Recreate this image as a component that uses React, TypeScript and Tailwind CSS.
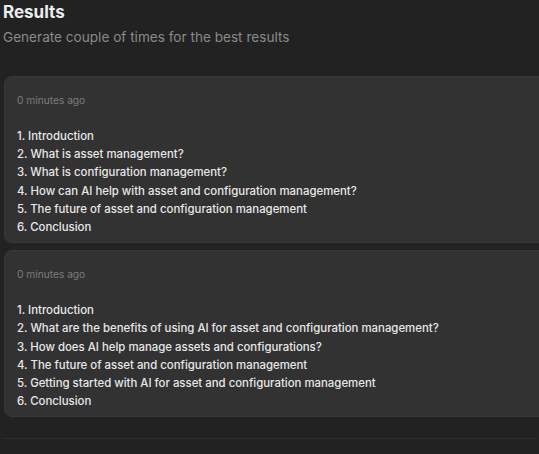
const results = [
  {
    time: "0 minutes ago",
    items: [
      "1. Introduction",
      "2. What is asset management?",
      "3. What is configuration management?",
      "4. How can AI help with asset and configuration management?",
      "5. The future of asset and configuration management",
      "6. Conclusion",
    ],
  },
  {
    time: "0 minutes ago",
    items: [
      "1. Introduction",
      "2. What are the benefits of using AI for asset and configuration management?",
      "3. How does AI help manage assets and configurations?",
      "4. The future of asset and configuration management",
      "5. Getting started with AI for asset and configuration management",
      "6. Conclusion",
    ],
  },
];

export default function App() {
  return (
    <div className="h-[454px] w-[539px] overflow-hidden bg-[#222222] font-['Inter',sans-serif]">
      {/* Header */}
      <div className="px-[3px] pt-[1px]">
        <h1 className="text-[17px] font-bold leading-[22px] text-[#ececec]">Results</h1>
        <p className="mt-[2px] text-[13.6px] leading-[24px] text-[#8a8a8a]">
          Generate couple of times for the best results
        </p>
      </div>

      {/* Result cards */}
      <div className="mt-[27px] flex flex-col gap-[7px] pl-[4px]">
        {results.map((r, i) => (
          <div
            key={i}
            className="-mr-[8px] rounded-[8px] border border-[#383838] bg-[#323232] pb-[6px] pl-[12px] pt-[15px]"
          >
            <div className="text-[10.2px] leading-[16px] text-[#7c7c7c]">{r.time}</div>
            <ul className="mt-[19px]">
              {r.items.map((item) => (
                <li key={item} className="text-[11.4px] font-medium leading-[18.2px] text-[#e8e8e8]">
                  {item}
                </li>
              ))}
            </ul>
          </div>
        ))}
      </div>

      <div className="mx-[2px] mt-[21px] h-px bg-[#2e2e2e]" />
    </div>
  );
}
